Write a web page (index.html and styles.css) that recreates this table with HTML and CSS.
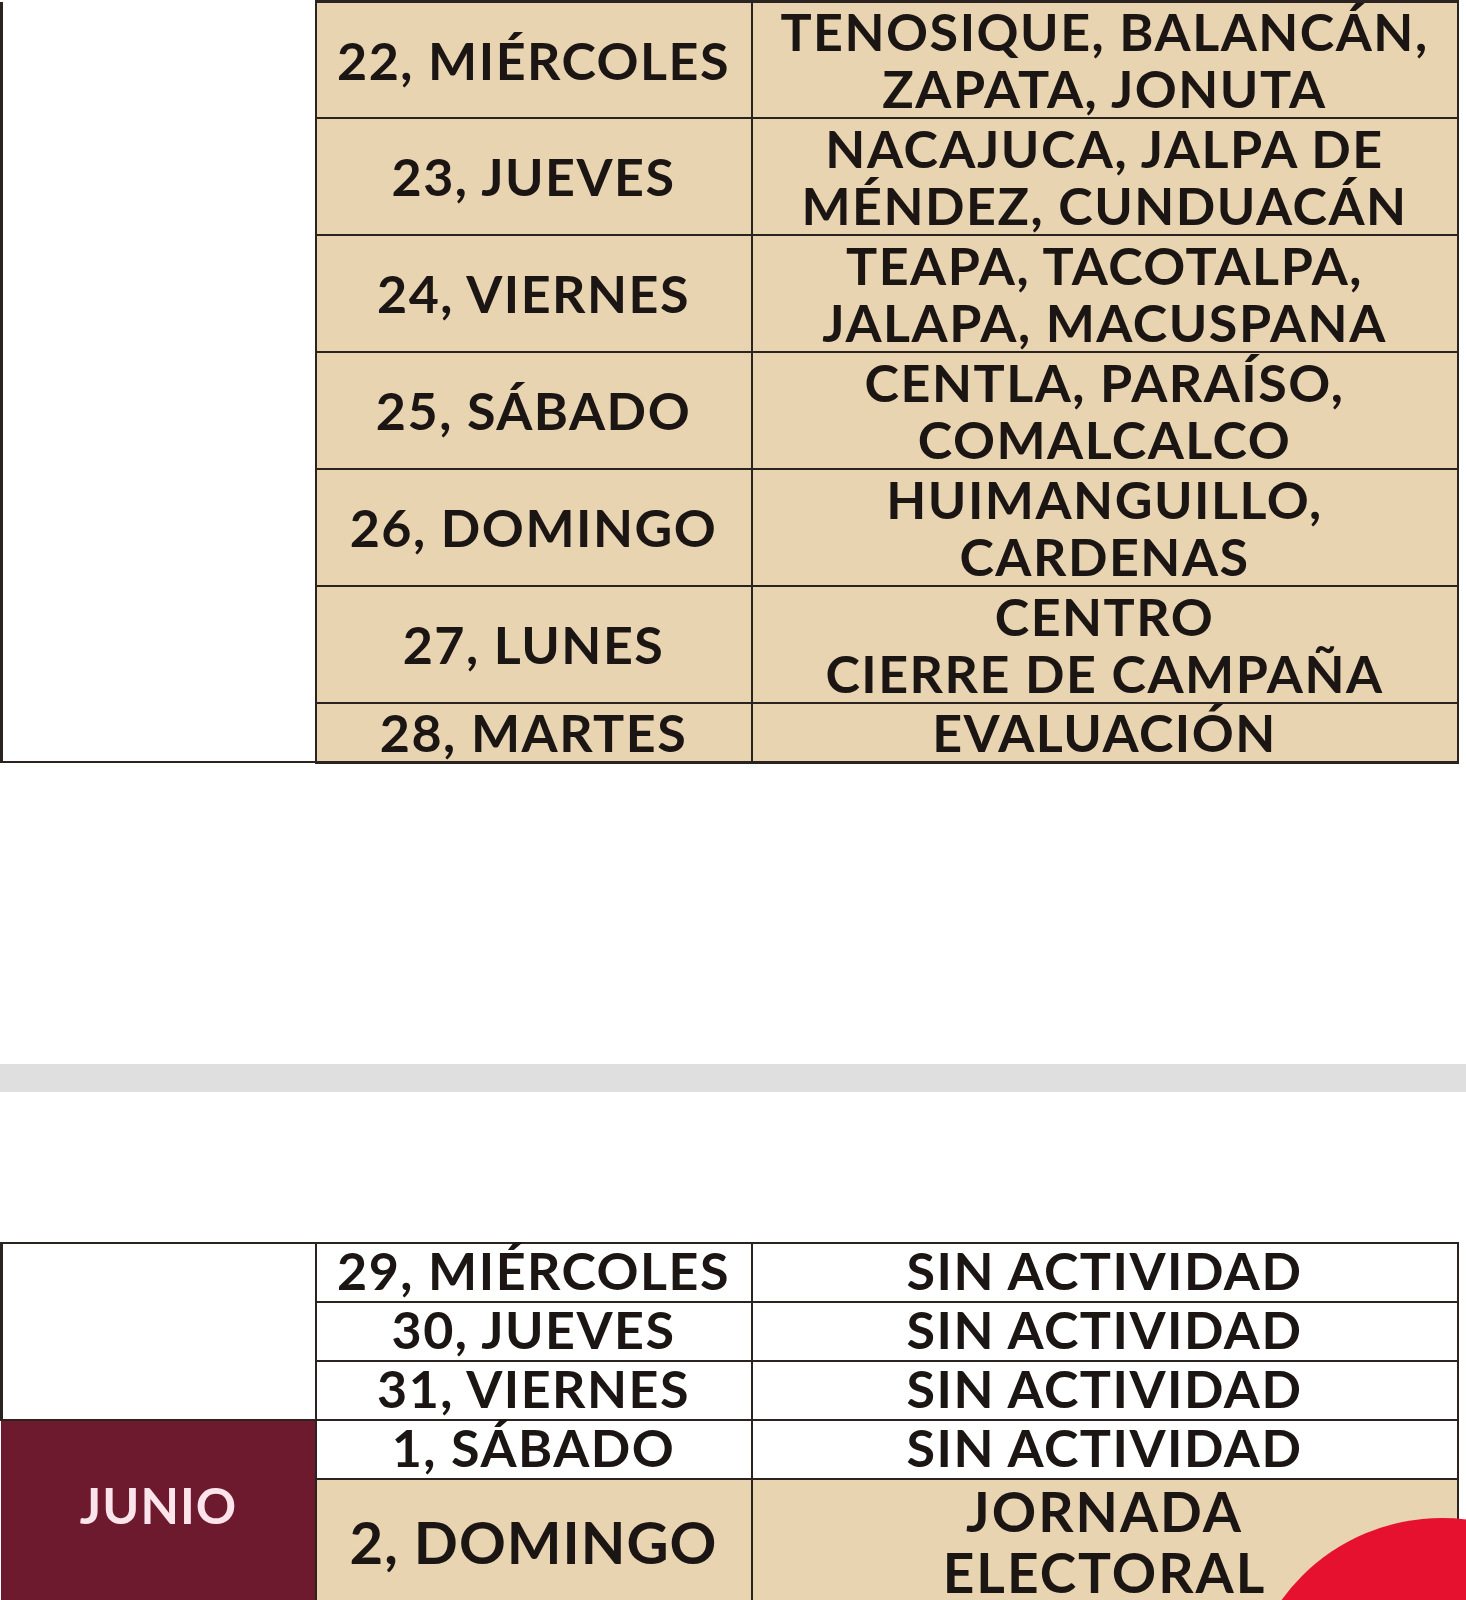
FILE: index.html
```html
<!DOCTYPE html>
<html lang="es">
<head>
<meta charset="utf-8">
<title>Calendario de campaña</title>
<link rel="stylesheet" href="styles.css">
</head>
<body>
<main class="page">
  <table class="sched sched-top">
    <colgroup>
      <col class="c-month"><col class="c-day"><col class="c-place">
    </colgroup>
    <tbody>
      <tr class="tall first">
        <td class="month month-blank month-open" rowspan="7"></td>
        <td class="day">22, MIÉRCOLES</td>
        <td class="place">TENOSIQUE, BALANCÁN,<br>ZAPATA, JONUTA</td>
      </tr>
      <tr class="tall">
        <td class="day">23, JUEVES</td>
        <td class="place">NACAJUCA, JALPA DE<br>MÉNDEZ, CUNDUACÁN</td>
      </tr>
      <tr class="tall">
        <td class="day">24, VIERNES</td>
        <td class="place">TEAPA, TACOTALPA,<br>JALAPA, MACUSPANA</td>
      </tr>
      <tr class="tall">
        <td class="day">25, SÁBADO</td>
        <td class="place">CENTLA, PARAÍSO,<br>COMALCALCO</td>
      </tr>
      <tr class="tall">
        <td class="day">26, DOMINGO</td>
        <td class="place">HUIMANGUILLO,<br>CARDENAS</td>
      </tr>
      <tr class="tall">
        <td class="day">27, LUNES</td>
        <td class="place">CENTRO<br>CIERRE DE CAMPAÑA</td>
      </tr>
      <tr class="short">
        <td class="day">28, MARTES</td>
        <td class="place">EVALUACIÓN</td>
      </tr>
    </tbody>
  </table>

  <div class="divider"></div>

  <table class="sched sched-bottom">
    <colgroup>
      <col class="c-month"><col class="c-day"><col class="c-place">
    </colgroup>
    <tbody>
      <tr class="single">
        <td class="month month-blank" rowspan="3"></td>
        <td class="day plain">29, MIÉRCOLES</td>
        <td class="place plain">SIN ACTIVIDAD</td>
      </tr>
      <tr class="single">
        <td class="day plain">30, JUEVES</td>
        <td class="place plain">SIN ACTIVIDAD</td>
      </tr>
      <tr class="single">
        <td class="day plain">31, VIERNES</td>
        <td class="place plain">SIN ACTIVIDAD</td>
      </tr>
      <tr class="single">
        <td class="month month-name" rowspan="2">JUNIO</td>
        <td class="day plain">1, SÁBADO</td>
        <td class="place plain">SIN ACTIVIDAD</td>
      </tr>
      <tr class="final">
        <td class="day big">2, DOMINGO</td>
        <td class="place vote">JORNADA<br>ELECTORAL</td>
      </tr>
    </tbody>
  </table>

  <div class="fab" aria-hidden="true"></div>
</main>
</body>
</html>
```

FILE: styles.css
```css
html, body {
  margin: 0;
  padding: 0;
  background: #ffffff;
}

.page {
  position: relative;
  width: 1466px;
  height: 1600px;
  overflow: hidden;
  font-family: "Lato", "Liberation Sans", sans-serif;
  font-weight: 700;
  color: #1b1613;
}

.sched {
  width: 1456px;
  table-layout: fixed;
  border-collapse: collapse;
  border-spacing: 0;
}

.c-month { width: 314px; }
.c-day { width: 436px; }
.c-place { width: 706px; }

.sched td {
  padding: 0;
  border: 2px solid #2a2320;
  text-align: center;
  vertical-align: middle;
  font-size: 52px;
  letter-spacing: 1.5px;
  line-height: 57px;
  white-space: nowrap;
}

.sched-top td {
  background: #e8d4b1;
}

.sched-top tr:first-child td {
  border-top-width: 3px;
}

.sched-top td.month-open {
  border-top: none;
  border-left-width: 3px;
}

.sched td.month-blank {
  background: #ffffff;
  border-left-width: 3px;
}

.sched-top tr.tall { height: 117px; }
.sched-top tr.tall.first { height: 115px; }
.sched-top tr.short { height: 59px; }

.sched-top tr.short td {
  line-height: 50px;
  border-bottom-width: 3px;
}

.divider {
  margin-top: 300px;
  height: 28px;
  background: #dfdfdf;
}

.sched-bottom {
  margin-top: 150px;
}

.sched-bottom tr.single { height: 59px; }
.sched-bottom tr.final { height: 126px; }

.sched-bottom td.plain {
  background: #ffffff;
  line-height: 50px;
  padding-bottom: 4px;
}

.sched-bottom td.day.big {
  background: #e8d4b1;
  font-size: 58px;
  letter-spacing: 1px;
}

.sched-bottom td.vote {
  background: #e8d4b1;
  font-size: 55px;
  letter-spacing: 2px;
  line-height: 61px;
}

.sched td.month-name {
  background: #6d1a2e;
  border-color: #6d1a2e;
  border-right-color: #2a2320;
  color: #fbe4ec;
  font-size: 50px;
  letter-spacing: 1px;
  padding: 0 0 14px;
}

.fab {
  position: absolute;
  left: 1244px;
  top: 1518px;
  width: 396px;
  height: 396px;
  border-radius: 50%;
  background: #e5112f;
}
```
